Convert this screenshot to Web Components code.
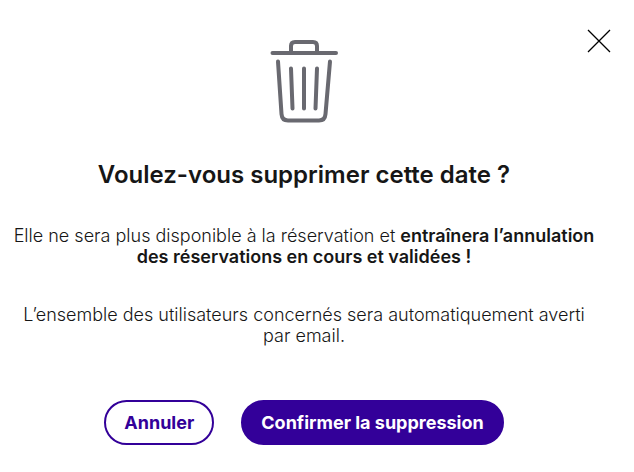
<!DOCTYPE html>
<html lang="fr">
<head>
<meta charset="utf-8">
<meta name="viewport" content="width=device-width, initial-scale=1">
<title>Supprimer la date</title>
<style>
body { margin: 0; background: #fff; color: #161616; font-family: Inter, "Open Sans", sans-serif; }
</style>
</head>
<body>
<confirm-dialog>
  <trash-icon slot="icon"></trash-icon>
  <span slot="title">Voulez-vous supprimer cette date ?</span>
  <dialog-text>Elle ne sera plus disponible à la réservation et <b>entraînera l’annulation des réservations en cours et validées !</b></dialog-text>
  <dialog-text>L’ensemble des utilisateurs concernés sera automatiquement averti par email.</dialog-text>
  <pill-button slot="actions">Annuler</pill-button>
  <pill-button slot="actions" primary>Confirmer la suppression</pill-button>
</confirm-dialog>
<script>
function define(name, html) {
  customElements.define(name, class extends HTMLElement {
    constructor() {
      super();
      this.attachShadow({ mode: 'open' }).innerHTML = html;
    }
  });
}

define('trash-icon', `
<style>:host { display: block; } svg { display: block; }</style>
<svg width="70" height="86" viewBox="0 0 70 86" fill="none" stroke="#696970" stroke-width="4" stroke-linecap="round" stroke-linejoin="round" aria-hidden="true">
  <path d="M3.500 15H67M22 15V8Q22 4 26 4H44Q48 4 48 8V15"/>
  <path d="M9 23.500L12.500 76Q13 82.500 19 82.500H50Q56 82.500 56.500 76L61 23.500"/>
  <path d="M22 30.500L23.500 70.500M35 30.500V70.500M48 30.500L46.500 70.500"/>
</svg>`);

define('close-button', `
<style>
:host { display: block; }
button { display: block; padding: 0; border: 0; background: none; cursor: pointer; color: #000; }
svg { display: block; }
</style>
<button type="button" aria-label="Fermer">
  <svg width="24" height="24" viewBox="0 0 24 24" fill="none" stroke="currentColor" stroke-width="1.300" aria-hidden="true"><path d="M1 1L23 23M23 1L1 23"/></svg>
</button>`);

define('dialog-text', `
<style>
:host { display: block; }
p { margin: 0; font-size: 18px; line-height: 21px; font-weight: 300; text-align: center; }
::slotted(b) { font-weight: 600; }
</style>
<p><slot></slot></p>`);

define('pill-button', `
<style>
:host { display: block; }
button { display: block; box-sizing: border-box; padding: 10px 18px; border: 2px solid #309; border-radius: 24px; background: #fff; color: #309; font: 700 18px/21px Inter, "Open Sans", sans-serif; cursor: pointer; white-space: nowrap; }
:host([primary]) button { background: #309; color: #fff; }
</style>
<button type="button"><slot></slot></button>`);

define('confirm-dialog', `
<style>
:host { display: block; position: relative; padding: 38px 34px 27px 8px; }
close-button { position: absolute; top: 29px; right: 23px; }
section { display: flex; flex-direction: column; align-items: center; }
h1 { margin: 36px 0 35px; font-size: 24px; line-height: 30px; font-weight: 600; text-align: center; }
.body { display: flex; flex-direction: column; gap: 37px; align-self: stretch; }
.actions { display: flex; justify-content: center; gap: 27px; margin-top: 54px; }
</style>
<section role="dialog" aria-labelledby="title">
  <slot name="icon"></slot>
  <h1 id="title"><slot name="title"></slot></h1>
  <div class="body"><slot></slot></div>
  <div class="actions"><slot name="actions"></slot></div>
</section>
<close-button></close-button>`);
</script>
</body>
</html>
